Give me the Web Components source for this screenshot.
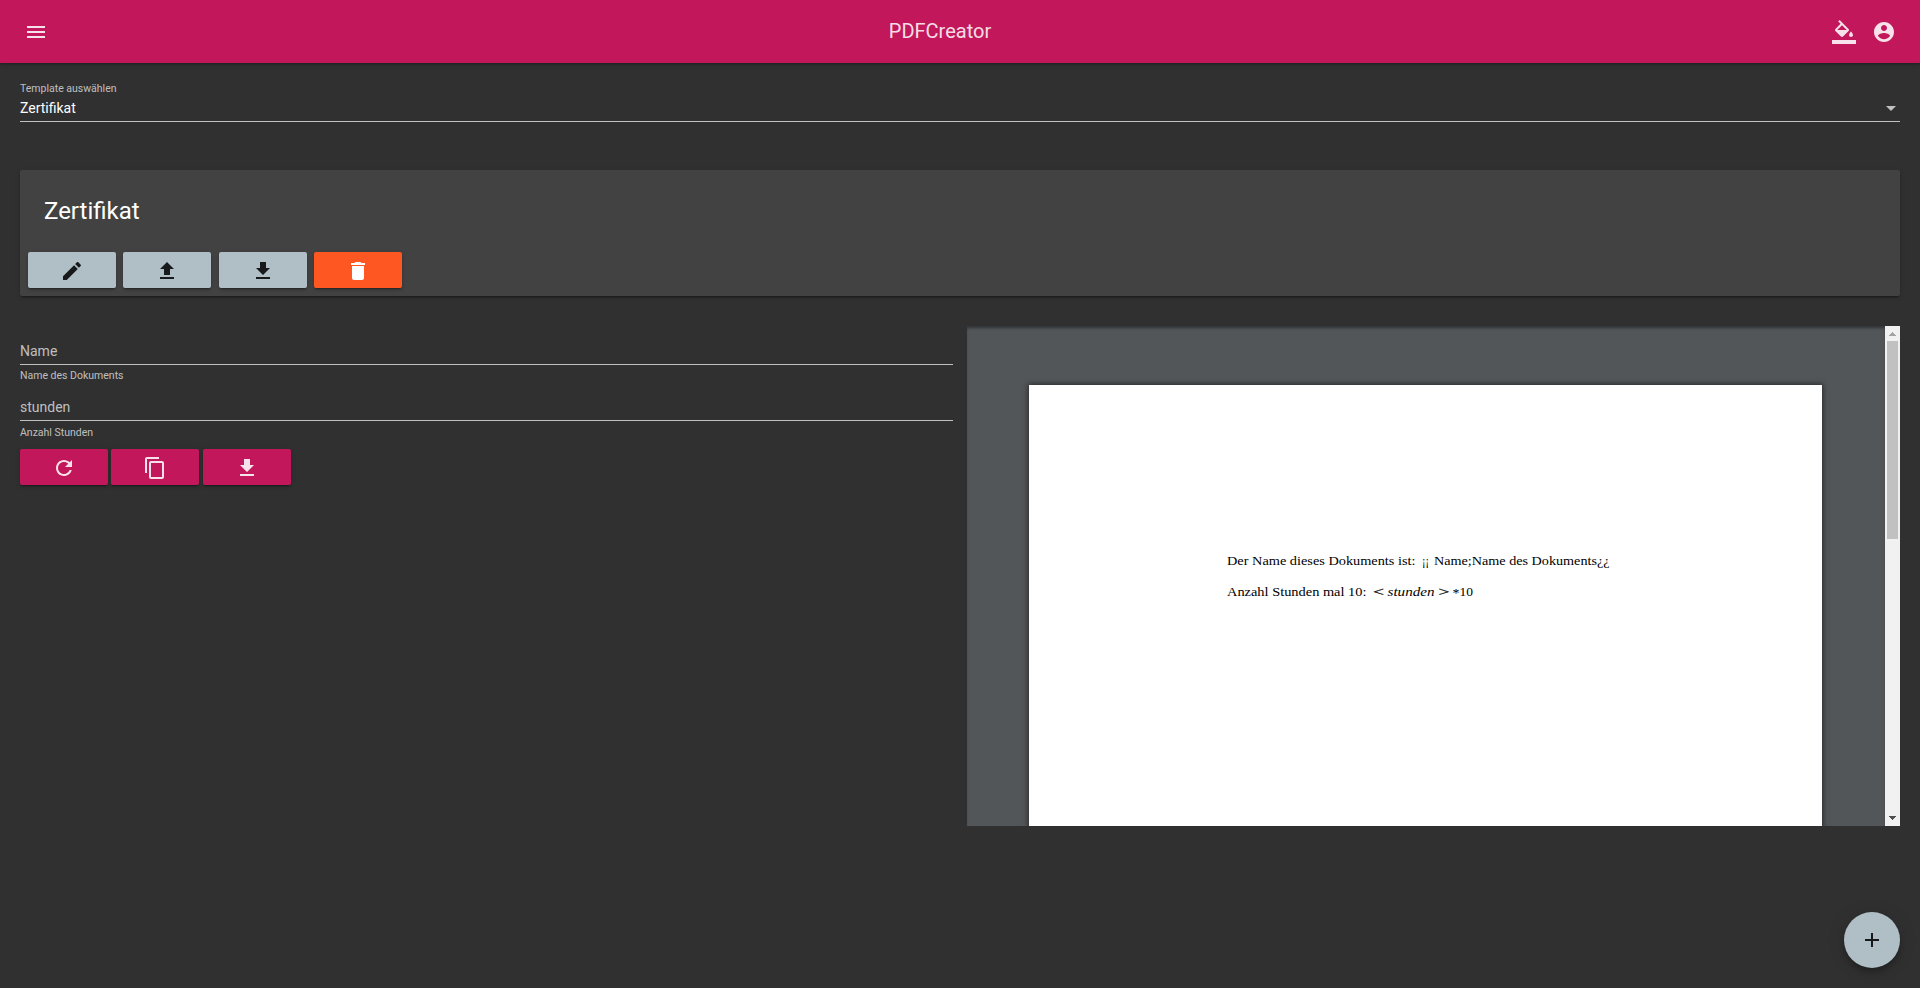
<!DOCTYPE html>
<html lang="de">
<head>
<meta charset="utf-8">
<title>PDFCreator</title>
<style>
html,body{margin:0;height:100%;background:#303030;overflow:hidden}
body{font-family:Roboto,sans-serif;color:#fff}
</style>
</head>
<body>
<pdf-app></pdf-app>
<script>
const define = (name, html, setup) => {
  const template = document.createElement('template');
  template.innerHTML = html;
  customElements.define(name, class extends HTMLElement {
    constructor() {
      super();
      this.attachShadow({mode: 'open'}).append(template.content.cloneNode(true));
    }
    connectedCallback() { if (setup) setup(this, this.shadowRoot); }
  });
};

const ICONS = {
  menu: '<path d="M3 18h18v-2H3v2zm0-5h18v-2H3v2zm0-7v2h18V6H3z"/>',
  fill: '<path d="M16.56 8.94L7.62 0 6.21 1.41l2.38 2.38-5.15 5.15c-.59.59-.59 1.54 0 2.12l5.5 5.5c.29.29.68.44 1.06.44s.77-.15 1.06-.44l5.5-5.5c.59-.58.59-1.53 0-2.12zM5.21 10L10 5.21 14.79 10H5.21zM19 11.5s-2 2.17-2 3.5c0 1.1.9 2 2 2s2-.9 2-2c0-1.33-2-3.5-2-3.5z"/><path d="M0 20h24v4H0z"/>',
  account: '<path d="M12 2C6.48 2 2 6.48 2 12s4.48 10 10 10 10-4.48 10-10S17.52 2 12 2zm0 3c1.66 0 3 1.34 3 3s-1.34 3-3 3-3-1.34-3-3 1.34-3 3-3zm0 14.2c-2.5 0-4.71-1.28-6-3.22.03-1.99 4-3.08 6-3.08 1.99 0 5.97 1.09 6 3.08-1.29 1.94-3.5 3.22-6 3.22z"/>',
  edit: '<path d="M3 17.25V21h3.75L17.81 9.94l-3.75-3.75L3 17.25zM20.71 7.04c.39-.39.39-1.02 0-1.41l-2.34-2.34c-.39-.39-1.02-.39-1.41 0l-1.83 1.83 3.75 3.75 1.83-1.83z"/>',
  upload: '<path d="M9 16h6v-6h4l-7-7-7 7h4zm-4 2h14v2H5z"/>',
  download: '<path d="M19 9h-4V3H9v6H5l7 7 7-7zM5 18v2h14v-2H5z"/>',
  trash: '<path d="M6 19c0 1.1.9 2 2 2h8c1.1 0 2-.9 2-2V7H6v12zM19 4h-3.5l-1-1h-5l-1 1H5v2h14V4z"/>',
  refresh: '<path d="M17.65 6.35C16.2 4.9 14.21 4 12 4c-4.42 0-7.99 3.58-7.99 8s3.57 8 7.99 8c3.73 0 6.84-2.55 7.73-6h-2.08c-.82 2.33-3.04 4-5.65 4-3.31 0-6-2.69-6-6s2.69-6 6-6c1.66 0 3.14.69 4.22 1.78L13 11h7V4l-2.35 2.35z"/>',
  copy: '<path d="M16 1H4c-1.1 0-2 .9-2 2v14h2V3h12V1zm3 4H8c-1.1 0-2 .9-2 2v14c0 1.1.9 2 2 2h11c1.1 0 2-.9 2-2V7c0-1.1-.9-2-2-2zm0 16H8V7h11v14z"/>',
  add: '<path d="M19 13h-6v6h-2v-6H5v-2h6V5h2v6h6v2z"/>'
};

define('md-icon', `
<style>:host{display:block;width:24px;height:24px;flex:none}svg{display:block;width:24px;height:24px;fill:currentColor}</style>
<svg viewBox="0 0 24 24"></svg>`,
(el, root) => { root.querySelector('svg').innerHTML = ICONS[el.getAttribute('name')]; });

define('md-toolbar', `
<style>
:host{display:flex;justify-content:space-between;align-items:center;height:63px;padding:1px 24px 0;box-sizing:border-box;background:#c2185b;color:rgba(255,255,255,.87);box-shadow:0 1px 3px rgba(0,0,0,.4);font-size:20px;line-height:24px}
.end{display:flex;gap:16px}
.title{padding-bottom:2px}
</style>
<slot name="start"></slot><span class="title"><slot></slot></span><div class="end"><slot name="end"></slot></div>`);

define('md-select', `
<style>
:host{display:block;height:59px;padding-top:19px;box-sizing:border-box;border-bottom:1px solid rgba(255,255,255,.7);font-size:14px}
.label{font-size:10.5px;line-height:14px;color:rgba(255,255,255,.7)}
.row{display:flex;justify-content:space-between;align-items:center;line-height:16px;margin-top:4px}
i{border:5px solid transparent;border-top-color:rgba(255,255,255,.7);border-bottom:0;margin-right:4px}
</style>
<div class="label"></div><div class="row"><slot></slot><i></i></div>`,
(el, root) => { root.querySelector('.label').textContent = el.getAttribute('label'); });

define('md-button', `
<style>
:host{display:flex;width:88px;height:36px;padding-top:2px;box-sizing:border-box;align-items:center;justify-content:center;flex:none;border-radius:2px;background:#c2185b;color:rgba(255,255,255,.87);box-shadow:0 3px 1px -2px rgba(0,0,0,.2),0 2px 2px 0 rgba(0,0,0,.14),0 1px 5px 0 rgba(0,0,0,.12)}
:host([tone=accent]){background:#b0bec5;color:rgba(0,0,0,.87)}
:host([tone=warn]){background:#ff5722;color:#fff}
</style><slot></slot>`);

define('md-card', `
<style>
:host{display:block;height:126px;box-sizing:border-box;padding:27px 8px 8px;background:#424242;border-radius:2px;box-shadow:0 3px 1px -2px rgba(0,0,0,.2),0 2px 2px 0 rgba(0,0,0,.14),0 1px 5px 0 rgba(0,0,0,.12)}
h2{margin:0 16px 27px;font-size:24px;font-weight:400;line-height:28px}
.actions{display:flex;gap:7.4px}
</style>
<h2><slot name="title"></slot></h2><div class="actions"><slot></slot></div>`);

define('md-field', `
<style>
:host{display:block;height:56px;color:rgba(255,255,255,.7)}
.input{height:21px;border-bottom:1px solid rgba(255,255,255,.7);font-size:14px;line-height:16px}
.hint{font-size:10.5px;line-height:14px;margin-top:var(--hint-gap,4px)}
</style>
<div class="input"><slot></slot></div><div class="hint"></div>`,
(el, root) => { root.querySelector('.hint').textContent = el.getAttribute('hint'); });

define('pdf-scrollbar', `
<style>
:host{display:flex;flex-direction:column;align-items:center;width:15px;background:#f1f1f1}
.cap{display:flex;height:15px;width:15px;box-sizing:border-box;justify-content:center;padding-top:6px}
.cap.down{padding-top:5px}
.thumb{width:11px;height:198px;background:#c1c1c1}
.gap{flex:1}
svg{display:block}
</style>
<div class="cap"><svg width="7" height="4" shape-rendering="crispEdges"><path fill="#a3a3a3" d="M3 0h1v1h1v1h1v1h1v1H0V3h1V2h1V1h1z"/></svg></div>
<div class="thumb"></div><div class="gap"></div>
<div class="cap down"><svg width="7" height="4" shape-rendering="crispEdges"><path fill="#505050" d="M3 4h1V3h1V2h1V1h1V0H0v1h1v1h1v1h1z"/></svg></div>`);

define('pdf-viewer', `
<style>
:host{display:flex;height:500px;background:#525659;overflow:hidden}
.stage{flex:1;padding:59px 63px 0 62px;overflow:hidden;box-shadow:inset 0 3px 3px -1px rgba(0,0,0,.4)}
.page{height:1100px;background:#fff;box-shadow:0 0 5px 1px rgba(0,0,0,.5)}
svg{display:block;font:13.4px "Liberation Serif",serif;fill:#000}
.rel{stroke:#000;stroke-width:.3px}
</style>
<div class="stage"><div class="page">
<svg width="793" height="441">
<g transform="translate(-1029 -385)">
<text x="1227" y="565" textLength="188.5" lengthAdjust="spacingAndGlyphs">Der Name dieses Dokuments ist:</text>
<text x="1422" y="565" textLength="7" lengthAdjust="spacingAndGlyphs">¡¡</text>
<text x="1434" y="565" textLength="175.5" lengthAdjust="spacingAndGlyphs">Name;Name des Dokuments¿¿</text>
<text x="1227" y="596" textLength="139.5" lengthAdjust="spacingAndGlyphs">Anzahl Stunden mal 10:</text>
<text class="rel" x="1373" y="596" textLength="11" lengthAdjust="spacingAndGlyphs">&lt;</text>
<text x="1387.5" y="596" textLength="47" lengthAdjust="spacingAndGlyphs" font-style="italic">stunden</text>
<text class="rel" x="1438.5" y="596" textLength="11" lengthAdjust="spacingAndGlyphs">&gt;</text>
<text x="1452.5" y="597" textLength="7" lengthAdjust="spacingAndGlyphs">*</text>
<text x="1459.5" y="596" textLength="13.5" lengthAdjust="spacingAndGlyphs">10</text>
</g></svg></div></div>
<pdf-scrollbar></pdf-scrollbar>`);

define('md-fab', `
<style>:host{position:fixed;right:20px;bottom:20px;display:flex;align-items:center;justify-content:center;width:56px;height:56px;border-radius:50%;background:#b0bec5;color:rgba(0,0,0,.87);box-shadow:0 3px 5px -1px rgba(0,0,0,.2),0 6px 10px 0 rgba(0,0,0,.14),0 1px 18px 0 rgba(0,0,0,.12)}</style><slot></slot>`);

define('pdf-app', `
<style>
:host{display:block;height:100vh;background:#303030}
main{padding:0 20px}
md-card{margin-top:48px}
.split{display:grid;grid-template-columns:933px 933px;gap:14px;margin-top:30px}
.form{padding-top:17px}
.row{display:flex;gap:3.4px;margin-top:-6px}
</style>
<md-toolbar>
  <md-icon slot="start" name="menu"></md-icon>PDFCreator
  <md-icon slot="end" name="fill"></md-icon><md-icon slot="end" name="account"></md-icon>
</md-toolbar>
<main>
  <md-select label="Template auswählen">Zertifikat</md-select>
  <md-card><span slot="title">Zertifikat</span>
    <md-button tone="accent"><md-icon name="edit"></md-icon></md-button>
    <md-button tone="accent"><md-icon name="upload"></md-icon></md-button>
    <md-button tone="accent"><md-icon name="download"></md-icon></md-button>
    <md-button tone="warn"><md-icon name="trash"></md-icon></md-button>
  </md-card>
  <div class="split">
    <div class="form">
      <md-field hint="Name des Dokuments">Name</md-field>
      <md-field hint="Anzahl Stunden" style="--hint-gap:5px">stunden</md-field>
      <div class="row">
        <md-button><md-icon name="refresh"></md-icon></md-button>
        <md-button><md-icon name="copy"></md-icon></md-button>
        <md-button><md-icon name="download"></md-icon></md-button>
      </div>
    </div>
    <pdf-viewer></pdf-viewer>
  </div>
</main>
<md-fab><md-icon name="add"></md-icon></md-fab>`);
</script>
</body>
</html>
